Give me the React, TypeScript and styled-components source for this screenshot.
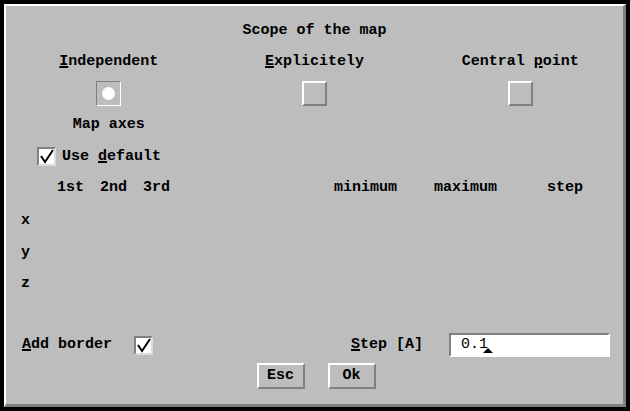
import styled, { createGlobalStyle } from 'styled-components';

const GlobalStyle = createGlobalStyle`
  html, body {
    margin: 0;
    padding: 0;
    background: #000;
  }
  body {
    font-family: "Liberation Mono", "DejaVu Sans Mono", monospace;
  }
`;

const Frame = styled.div`
  width: 630px;
  height: 411px;
  box-sizing: border-box;
  padding: 4px;
  background: #000;
`;

const Panel = styled.div`
  height: 100%;
  box-sizing: border-box;
  background: #bdbdbd;
  border-top: 2px solid #fff;
  border-left: 2px solid #fff;
  border-right: 3px solid #808080;
  border-bottom: 3px solid #808080;
  display: flex;
  flex-direction: column;
  font: bold 15px/18px "Liberation Mono", "DejaVu Sans Mono", monospace;
  color: #000;
`;

const Title = styled.div`
  margin-top: 16px;
  height: 18px;
  text-align: center;
`;

const Key = styled.span`
  text-decoration: underline;
  text-decoration-thickness: 2px;
  text-underline-offset: 1px;
`;

const Options = styled.div`
  margin-top: 13px;
  display: grid;
  grid-template-columns: repeat(3, 1fr);
`;

const Option = styled.div`
  display: flex;
  flex-direction: column;
  align-items: center;
`;

const OptionLabel = styled.div`
  height: 18px;
  white-space: pre;
`;

const ChoiceBox = styled.div<{ $sunken?: boolean }>`
  margin-top: 10px;
  width: 25px;
  height: 25px;
  box-sizing: border-box;
  display: flex;
  align-items: center;
  justify-content: center;
  border-style: solid;
  border-width: ${(p) => (p.$sunken ? '1px' : '2px')};
  border-color: ${(p) =>
    p.$sunken ? '#808080 #fff #fff #808080' : '#fff #808080 #808080 #fff'};
`;

const Dot = styled.div`
  width: 13px;
  height: 13px;
  border-radius: 50%;
  background: #fff;
`;

const SubLabel = styled.div`
  margin-top: 10px;
  height: 18px;
`;

const CheckRow = styled.div`
  margin-top: 13px;
  padding-left: 31px;
  display: flex;
  align-items: center;
  gap: 6px;
`;

const CheckBox = styled.div`
  width: 19px;
  height: 19px;
  box-sizing: border-box;
  background: #fff;
  border: 2px solid;
  border-color: #808080 #dcdcdc #dcdcdc #808080;
  display: flex;
`;

const HeaderRow = styled.div`
  margin-top: 13px;
  padding-left: 51px;
  display: grid;
  grid-template-columns: 43px 43px 191px 100px 113px auto;
  height: 18px;
`;

const Axes = styled.div`
  margin-top: 15px;
  padding-left: 15px;
  display: flex;
  flex-direction: column;
  gap: 13.5px;
`;

const AxisLabel = styled.div`
  height: 18px;
`;

const BottomRow = styled.div`
  margin-top: 40px;
  padding-left: 16px;
  display: flex;
  align-items: center;
  height: 24px;
`;

const Spaced = styled.div<{ $left: number }>`
  margin-left: ${(p) => p.$left}px;
  white-space: pre;
  display: flex;
`;

const Field = styled.div`
  position: relative;
  margin-left: 26px;
  width: 161px;
  height: 24px;
  box-sizing: border-box;
  background: #fff;
  border: 2px solid;
  border-color: #808080 #fff #fff #808080;
  padding-left: 10px;
  font-weight: normal;
  line-height: 20px;
`;

const Caret = styled.div`
  position: absolute;
  left: 32px;
  top: 13px;
  width: 0;
  height: 0;
  border-left: 5px solid transparent;
  border-right: 5px solid transparent;
  border-bottom: 5px solid #000;
`;

const Buttons = styled.div`
  margin-top: 6px;
  padding-left: 3px;
  display: flex;
  justify-content: center;
  gap: 23px;
`;

const Button = styled.button`
  width: 48px;
  height: 26px;
  box-sizing: border-box;
  padding: 0;
  background: #bdbdbd;
  border: 2px solid;
  border-color: #fff #808080 #808080 #fff;
  font: bold 15px/18px "Liberation Mono", "DejaVu Sans Mono", monospace;
  color: #000;
`;

const Check = () => (
  <svg width="15" height="15" viewBox="0 0 15 15">
    <path d="M2 7 L6 13 L14 1" fill="none" stroke="#000" strokeWidth="2" />
  </svg>
);

const App = () => {
  return (
    <Frame>
      <GlobalStyle />
      <Panel>
        <Title>Scope of the map</Title>
        <Options>
          <Option>
            <OptionLabel>
              <Key>I</Key>ndependent
            </OptionLabel>
            <ChoiceBox $sunken>
              <Dot />
            </ChoiceBox>
            <SubLabel>Map axes</SubLabel>
          </Option>
          <Option>
            <OptionLabel>
              <Key>E</Key>xplicitely
            </OptionLabel>
            <ChoiceBox />
          </Option>
          <Option>
            <OptionLabel>
              Central <Key>p</Key>oint
            </OptionLabel>
            <ChoiceBox />
          </Option>
        </Options>
        <CheckRow>
          <CheckBox>
            <Check />
          </CheckBox>
          <span>
            Use <Key>d</Key>efault
          </span>
        </CheckRow>
        <HeaderRow>
          <span>1st</span>
          <span>2nd</span>
          <span>3rd</span>
          <span>minimum</span>
          <span>maximum</span>
          <span>step</span>
        </HeaderRow>
        <Axes>
          <AxisLabel>x</AxisLabel>
          <AxisLabel>y</AxisLabel>
          <AxisLabel>z</AxisLabel>
        </Axes>
        <BottomRow>
          <span>
            <Key>A</Key>dd border
          </span>
          <Spaced $left={22}>
            <CheckBox>
              <Check />
            </CheckBox>
          </Spaced>
          <Spaced $left={198}>
            <Key>S</Key>tep [A]
          </Spaced>
          <Field>
            0.1
            <Caret />
          </Field>
        </BottomRow>
        <Buttons>
          <Button>Esc</Button>
          <Button>Ok</Button>
        </Buttons>
      </Panel>
    </Frame>
  );
};

export default App;
